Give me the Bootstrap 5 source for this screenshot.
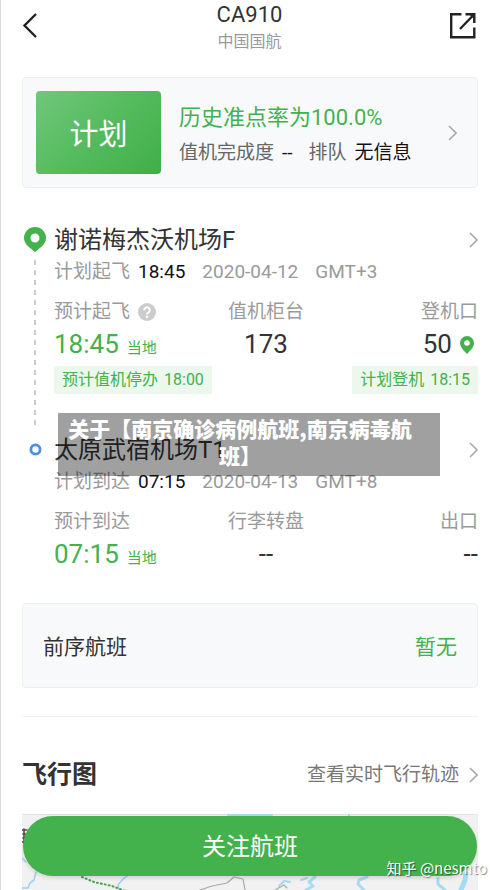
<!DOCTYPE html>
<html lang="zh-CN">
<head>
<meta charset="utf-8">
<meta name="viewport" content="width=device-width, initial-scale=1">
<title>CA910 中国国航</title>
<link href="https://cdn.jsdelivr.net/npm/bootstrap@5.3.0/dist/css/bootstrap.min.css" rel="stylesheet">
<style>
  :root { --green: #43b14c; --ink: #333; --muted: #9a9a9a; }
  body { font-family: Roboto, "Noto Sans CJK SC", sans-serif; color: var(--ink); background: #fff; font-size: 19px; line-height: 30px; }
  .screen { border-left: 1px solid #d9d9d9; padding: 0 22px 0 21px; }
  svg { display: block; flex: none; }
  a { color: inherit; text-decoration: none; }
  .topbar { padding: 0 1px 24px 0; }
  .topbar button { width: 28px; height: 28px; color: #222; }
  .flight-no { font-size: 22px; line-height: 30px; margin: 0; font-weight: 400; }
  .airline { font-size: 16px; line-height: 23px; color: var(--muted); }
  .panel { background: #f7f9fb; border: 1px solid #eceff1; border-radius: 4px; }
  .status-panel { padding: 13px 20px 13px 13px; gap: 18px; }
  .status-tile { width: 125px; height: 83px; padding-top: 4px; border-radius: 4px; font-size: 29px; color: #fff; background: linear-gradient(135deg, #70c77a, #55bb5e 50%, #40ae49); }
  .status-text { padding-top: 4px; }
  .rate { font-size: 22px; line-height: 36px; color: var(--green); }
  .status-line { line-height: 34px; color: #666; }
  .dark { color: #111; }
  .mute { color: var(--muted); }
  .green { color: var(--green); }
  .route { padding-top: 35px; }
  .rail { width: 26px; margin-right: 6px; }
  .rail-line { width: 2px; flex: 1; margin: 8px 0 4px; background: repeating-linear-gradient(#ccc 0 5px, transparent 5px 10px); }
  .ring { margin-top: 10px; }
  .airport { font-size: 24px; line-height: 34px; font-weight: 400; margin: 0; }
  .stamp { margin-left: 17px; }
  .facts { padding-top: 10px; }
  .value { font-size: 26px; line-height: 35px; }
  .local { font-size: 15px; }
  .tag { font-size: 16px; line-height: 28px; padding: 0 8px; gap: 6px; background: #ecf8ee; color: var(--green); }
  .tags { padding: 0 0 39px; }
  .prior { margin-top: 27px; padding: 4px 20px 0; font-size: 21px; line-height: 79px; }
  .rule { margin: 28px 0 0; border-color: #ccc; }
  .map-head { padding: 41px 0 22px; line-height: 34px; }
  .map-head h2 { font-size: 25px; line-height: 34px; font-weight: 700; margin: 0; }
  .map-head a { color: #777; gap: 10px; }
  .map { padding: 2px 1px 14px; background: #f1f1f1; }
  .map > svg { position: absolute; inset: 0; width: 100%; height: 100%; }
  .follow, .follow:hover { height: 60px; padding-top: 8px; border-radius: 30px; background: var(--green); color: #fff; font-size: 24px; border: 0; box-shadow: 0 2px 4px #0002; }
  .credit { position: absolute; right: -9px; bottom: 7px; font: 15px/30px "Noto Sans CJK SC", sans-serif; color: #fff; text-shadow: 1px 1px 1px #0007; white-space: nowrap; }
  .banner { position: absolute; top: 225px; left: 36px; right: 38px; padding: 2px 18px 7px 0; text-align: center; background: #0000005f; color: #fff; font: 900 21px/27px "Noto Sans CJK SC", sans-serif; margin: 0; }
</style>
</head>
<body>
<div class="screen">
  <header class="topbar d-flex justify-content-between align-items-center">
    <button type="button" class="btn p-0 border-0" aria-label="返回">
      <svg width="28" height="28" viewBox="0 0 28 28" fill="none" stroke="currentColor" stroke-width="2.4"><path d="M14 1 2.500 12.500 14 24"/></svg>
    </button>
    <div class="text-center">
      <h1 class="flight-no">CA910</h1>
      <div class="airline">中国国航</div>
    </div>
    <button type="button" class="btn p-0 border-0" aria-label="分享">
      <svg width="28" height="28" viewBox="0 0 28 28" fill="none" stroke="currentColor" stroke-width="2.400"><path d="M12.500 1.200H2.200V24.300H25.300V14.500M16.500 1.200H25.300V10M24.500 2 11 16"/><path d="M20 1h6v6Z" fill="currentColor" stroke="none"/></svg>
    </button>
  </header>

  <main>
    <a href="#status" class="panel status-panel d-flex align-items-center">
      <span class="status-tile d-flex align-items-center justify-content-center">计划</span>
      <span class="status-text flex-grow-1">
        <span class="rate d-block">历史准点率为100.0%</span>
        <span class="status-line d-flex"><span>值机完成度</span><span class="dark ms-2 me-3">--</span><span>排队</span><span class="dark ms-2">无信息</span></span>
      </span>
      <svg width="9" height="16" viewBox="0 0 9 16" fill="none" stroke="#aaa" stroke-width="1.600"><path d="m1 1 7 7-7 7"/></svg>
    </a>

    <div class="route position-relative">
      <section class="d-flex">
        <div class="rail d-flex flex-column align-items-center">
          <svg class="mt-1" width="22" height="25" viewBox="0 0 22 25"><path fill="#43b14c" fill-rule="evenodd" d="M11 0A11 11 0 0 1 22 11C22 17 17 20 11 25 5 20 0 17 0 11A11 11 0 0 1 11 0ZM11 6.500a4.500 4.500 0 1 0 0 9 4.500 4.500 0 0 0 0-9Z"/></svg>
          <div class="rail-line"></div>
        </div>
        <div class="flex-grow-1">
          <a href="#departure" class="d-flex justify-content-between align-items-center">
            <h2 class="airport">谢诺梅杰沃机场F</h2>
            <svg width="9" height="16" viewBox="0 0 9 16" fill="none" stroke="#aaa" stroke-width="1.600"><path d="m1 1 7 7-7 7"/></svg>
          </a>
          <div class="d-flex mute"><span>计划起飞</span><span class="dark ms-2">18:45</span><span class="stamp">2020-04-12</span><span class="stamp">GMT+3</span></div>
          <div class="facts row g-0">
            <div class="col-4">
              <div class="mute d-flex align-items-center gap-2">预计起飞
                <svg width="18" height="18" viewBox="0 0 18 18"><circle cx="9" cy="9" r="9" fill="#ccc"/><path d="M6.200 7.200a2.800 2.800 0 1 1 4.300 2.300C9.400 10.200 9 10.500 9 11.500" fill="none" stroke="#fff" stroke-width="2"/><circle cx="9" cy="13.800" r="1.200" fill="#fff"/></svg>
              </div>
              <div class="value green d-flex align-items-baseline gap-2">18:45<span class="local">当地</span></div>
            </div>
            <div class="col-4 text-center"><div class="mute">值机柜台</div><div class="value">173</div></div>
            <div class="col-4 text-end">
              <div class="mute">登机口</div>
              <div class="value d-flex justify-content-end align-items-center gap-2 pe-1">50
                <svg width="14" height="18" viewBox="0 0 14 18"><path fill="#43b14c" fill-rule="evenodd" d="M7 0a7 7 0 0 1 7 7c0 4-4 8-7 11C4 15 0 11 0 7a7 7 0 0 1 7-7Zm0 4.200a2.800 2.800 0 1 0 0 5.600 2.800 2.800 0 0 0 0-5.600Z"/></svg>
              </div>
            </div>
          </div>
          <div class="tags d-flex justify-content-between">
            <div class="tag d-flex"><span>预计值机停办</span><span>18:00</span></div>
            <div class="tag d-flex"><span>计划登机</span><span>18:15</span></div>
          </div>
        </div>
      </section>
      <section class="d-flex">
        <div class="rail d-flex flex-column align-items-center">
          <svg class="ring" width="13" height="13" viewBox="0 0 13 13" fill="none"><circle cx="6.500" cy="6.500" r="4.600" stroke="#4a90e2" stroke-width="2.800"/></svg>
        </div>
        <div class="flex-grow-1">
          <a href="#arrival" class="d-flex justify-content-between align-items-center">
            <h2 class="airport">太原武宿机场T1</h2>
            <svg width="9" height="16" viewBox="0 0 9 16" fill="none" stroke="#aaa" stroke-width="1.600"><path d="m1 1 7 7-7 7"/></svg>
          </a>
          <div class="d-flex mute"><span>计划到达</span><span class="dark ms-2">07:15</span><span class="stamp">2020-04-13</span><span class="stamp">GMT+8</span></div>
          <div class="facts row g-0">
            <div class="col-4"><div class="mute">预计到达</div><div class="value green d-flex align-items-baseline gap-2">07:15<span class="local">当地</span></div></div>
            <div class="col-4 text-center"><div class="mute">行李转盘</div><div class="value">--</div></div>
            <div class="col-4 text-end"><div class="mute">出口</div><div class="value">--</div></div>
          </div>
        </div>
      </section>
      <p class="banner">关于【南京确诊病例航班,南京病毒航班】</p>
    </div>

    <div class="panel prior d-flex justify-content-between"><span>前序航班</span><span class="green">暂无</span></div>
    <hr class="rule">
    <div class="map-head d-flex justify-content-between">
      <h2>飞行图</h2>
      <a href="#track" class="d-flex align-items-center">查看实时飞行轨迹
        <svg width="9" height="16" viewBox="0 0 9 16" fill="none" stroke="#aaa" stroke-width="1.600"><path d="m1 1 7 7-7 7"/></svg>
      </a>
    </div>
    <div class="map position-relative">
      <svg viewBox="0 0 456 76" preserveAspectRatio="xMidYMid slice" fill="none" stroke-linecap="round" stroke-linejoin="round" aria-hidden="true">
        <path d="M0 .5H456" stroke="#e2e2e2"/>
        <path d="M206 1H250M327 0V3" stroke="#a5dcec" stroke-width="2"/>
        <path d="M0 16H5M1 20H5M1 24H5M0 28H5M2 15V29" stroke="#544" stroke-width="1.500"/>
        <path d="M0 44 4 48M0 74 6 74 8 69 12 66 14 58M97 76 96 71 101 65 105 62" stroke="#a9cdea" stroke-width="1.600"/>
        <path d="M60 63 72 68 90 72 106 78" stroke="#43a254" stroke-width="2" stroke-dasharray="1 3"/>
        <path d="M178 76 190 72 205 69 212 63 221 65 223 76M253 76 262 71 265 74" stroke="#aaa" stroke-width="1.200"/>
        <path d="M257 72 262 67 268 68M279 66 285 64" stroke="#a9d6f0" stroke-width="2"/>
        <path d="M284 76 291 72 287 68 293 63M342 76 336 70 337 66 345 63M423 76 416 70 416 64" stroke="#a5dcf3" stroke-width="3"/>
        <path d="M439 76 443 66 444 60" stroke="#a5dcf3" stroke-width="5"/>
      </svg>
      <button type="button" class="follow btn w-100 position-relative">关注航班</button>
      <span class="credit">知乎 @nesmto</span>
    </div>
  </main>
</div>
<script src="https://cdn.jsdelivr.net/npm/bootstrap@5.3.0/dist/js/bootstrap.bundle.min.js"></script>
</body>
</html>
